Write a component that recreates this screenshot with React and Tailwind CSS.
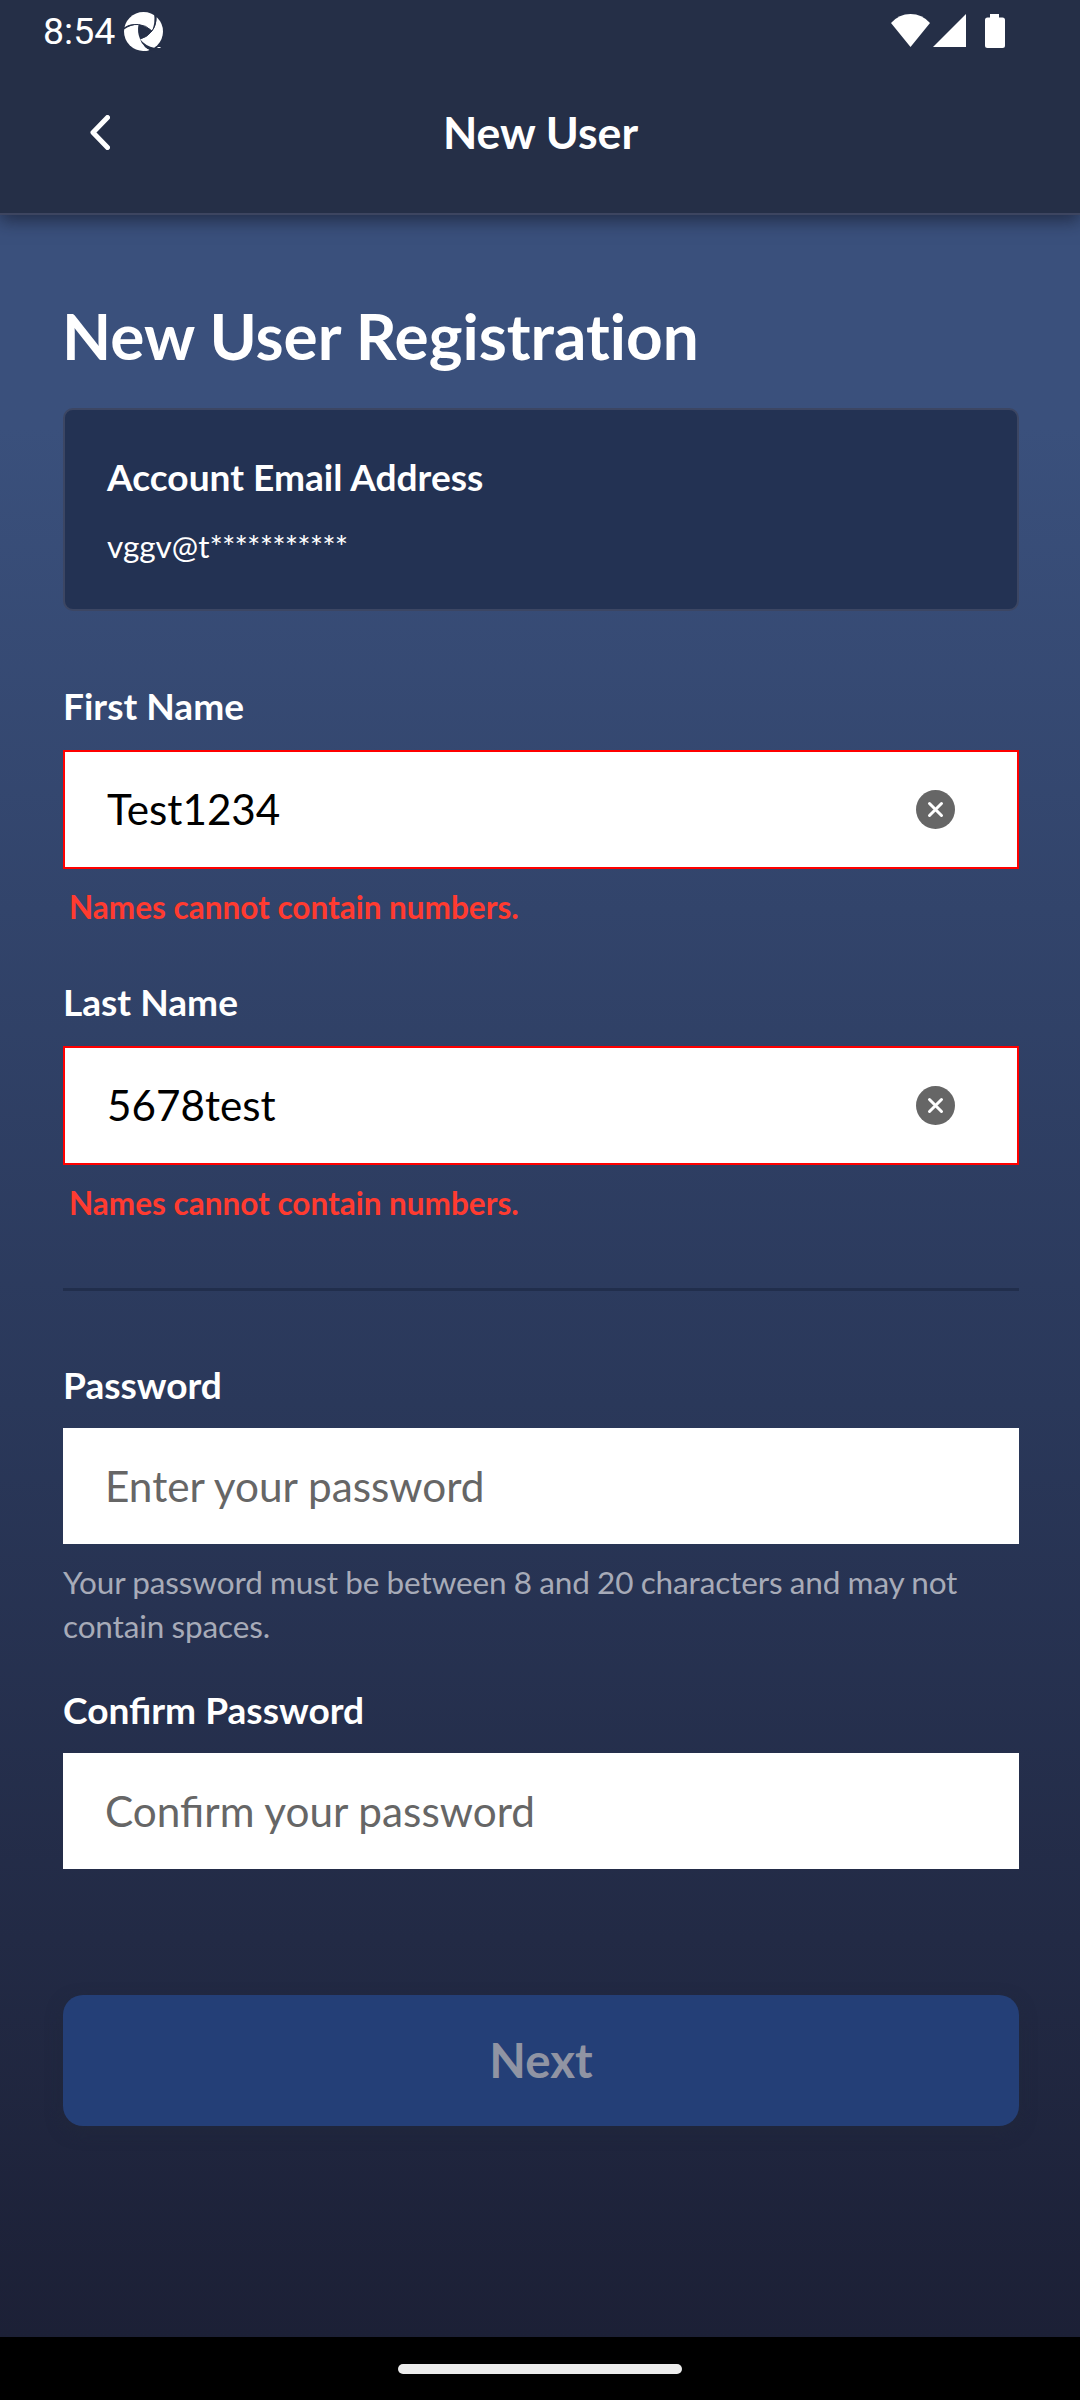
function StatusBar() {
  return (
    <div className="flex h-[62px] items-center pl-[43px] pr-[75px] text-white">
      <span className="w-[72px] text-[37.5px] leading-[62px] font-['Roboto',sans-serif] whitespace-nowrap">8:54</span>
      <svg className="ml-[9px] h-[39px] w-[39px]" viewBox="0 0 39 39">
        <circle cx="19.5" cy="19.5" r="19.5" fill="#fff" />
        <g fill="#252f47">
          <path d="M14.500 12.500Q22 13.500 28 19Q23 25.500 16 27Q13 20 14.500 12.500Z" />
          <path d="M0 15.500Q6 11 14.500 12.500Q6 13 0 17.500Z" />
          <path d="M30 1L34 5.500L32.500 5Q32.500 14 28 19Q31.500 11 30 1Z" />
          <path d="M16 27Q21 34 31 36L38 34V37L27 39Q19 36 16 27Z" />
        </g>
        <g fill="none" stroke="#252f47" strokeWidth="1">
          <path d="M0 16.500Q6 12 14.500 12.500Q22 13 28 19" />
          <path d="M32 4Q32.500 13 28 19Q23 25.500 16 27" />
        </g>
        <path d="M18.500 31.500Q21 36.500 25.500 38L22 39L17 38ZM33.500 35h3v1h-3z" fill="#fff" />
      </svg>
      <svg className="ml-auto h-[34px] w-[114px]" viewBox="0 0 114 34" fill="#fff">
        <path d="M0 9Q8 0 19.500 0Q31 0 39 9L19.500 33Z" />
        <path d="M42 33L75 0V33Z" />
        <path d="M99 0H108V3.500H111.500Q114 3.500 114 6V31.500Q114 34 111.500 34H96.500Q94 34 94 31.500V6Q94 3.500 96.500 3.500H99Z" />
      </svg>
    </div>
  );
}

function Label({ children }) {
  return <div className="h-[44px] text-[37.1px] leading-[42px] font-bold text-white">{children}</div>;
}

function NameField({ label, value }) {
  return (
    <div className="h-[296px]">
      <Label>{label}</Label>
      <div className="mt-[21px] flex h-[119px] items-center justify-between border-2 border-[#ff0000] bg-white pl-[42px] pr-[62px]">
        <span className="pb-[2px] text-[42.2px] leading-[50px] text-black">{value}</span>
        <svg className="h-[39px] w-[39px]" viewBox="0 0 39 39">
          <circle cx="19.5" cy="19.5" r="19.5" fill="#666" />
          <path d="M13.500 13.500L25.500 25.500M25.500 13.500L13.500 25.500" stroke="#fff" strokeWidth="3" strokeLinecap="round" />
        </svg>
      </div>
      <div className="mt-[17px] pl-[6px] text-[31.5px] leading-[42px] font-bold text-[#ff3b30]">Names cannot contain numbers.</div>
    </div>
  );
}

function PasswordField({ label, placeholder }) {
  return (
    <div>
      <Label>{label}</Label>
      <div className="mt-[20px] flex h-[116px] items-center bg-white pl-[42px] text-[42.3px] leading-[50px] text-[#666]">
        {placeholder}
      </div>
    </div>
  );
}

export default function App() {
  return (
    <div className="flex h-[2400px] w-[1080px] flex-col overflow-hidden bg-black font-['Lato',sans-serif]">
      <header className="z-10 h-[215px] shrink-0 border-b-2 border-[#3d4560] bg-[#252f47] shadow-[0_6px_16px_rgba(20,24,40,0.6)]">
        <StatusBar />
        <div className="grid h-[141px] grid-cols-[200px_1fr_200px] items-center text-white">
          <svg className="ml-[90px] h-[35px] w-[20px]" viewBox="0 0 20 35" fill="none" stroke="#fff" strokeWidth="5" strokeLinecap="round" strokeLinejoin="round">
            <path d="M17.500 2.500L3 17.500L17.500 32.500" />
          </svg>
          <h1 className="pb-[2px] pl-[1px] text-center text-[44.6px] leading-[54px] font-bold">New User</h1>
        </div>
      </header>

      <main className="flex h-[2122px] shrink-0 flex-col bg-linear-to-b from-[#3a507c] from-10% via-[#2a385a] via-56% to-[#1c2036] pt-[84px] pl-[63px] pr-[61px]">
        <h2 className="-ml-px h-[78px] text-[63.9px] leading-[73px] font-bold text-white [font-variant-ligatures:none]">New User Registration</h2>
        <section className="mt-[31px] h-[203px] rounded-[10px] border-2 border-[#3c4663] bg-[#233253] pt-[46px] pl-[42px] text-white">
          <Label>Account Email Address</Label>
          <p className="mt-[25px] text-[31.5px] leading-[42px]">
            vggv@t<span className="tracking-[-0.85px]">***********</span>
          </p>
        </section>

        <div className="mt-[74px]">
          <NameField label="First Name" value="Test1234" />
          <NameField label="Last Name" value="5678test" />
        </div>
        <div className="mt-[11px] mb-[73px] h-[3px] bg-[#212e4c]" />

        <PasswordField label="Password" placeholder="Enter your password" />
        <p className="mt-[16px] mb-[41px] text-[31.5px] leading-[44px] tracking-[-0.13px] text-[#a7abb8] [word-spacing:-0.6px]">
          Your password must be between 8 and 20 characters and may not contain spaces.
        </p>
        <PasswordField label="Confirm Password" placeholder="Confirm your password" />

        <button className="mt-[126px] h-[131px] rounded-[20px] bg-[#243f77] pb-[2px] text-[47.5px] font-bold text-[#9094a3] shadow-[0_6px_16px_rgba(34,40,58,0.6)]">
          Next
        </button>
      </main>

      <footer className="flex h-[63px] shrink-0 items-center justify-center bg-black">
        <div className="h-[10px] w-[284px] rounded-full bg-[#ececec]" />
      </footer>
    </div>
  );
}
